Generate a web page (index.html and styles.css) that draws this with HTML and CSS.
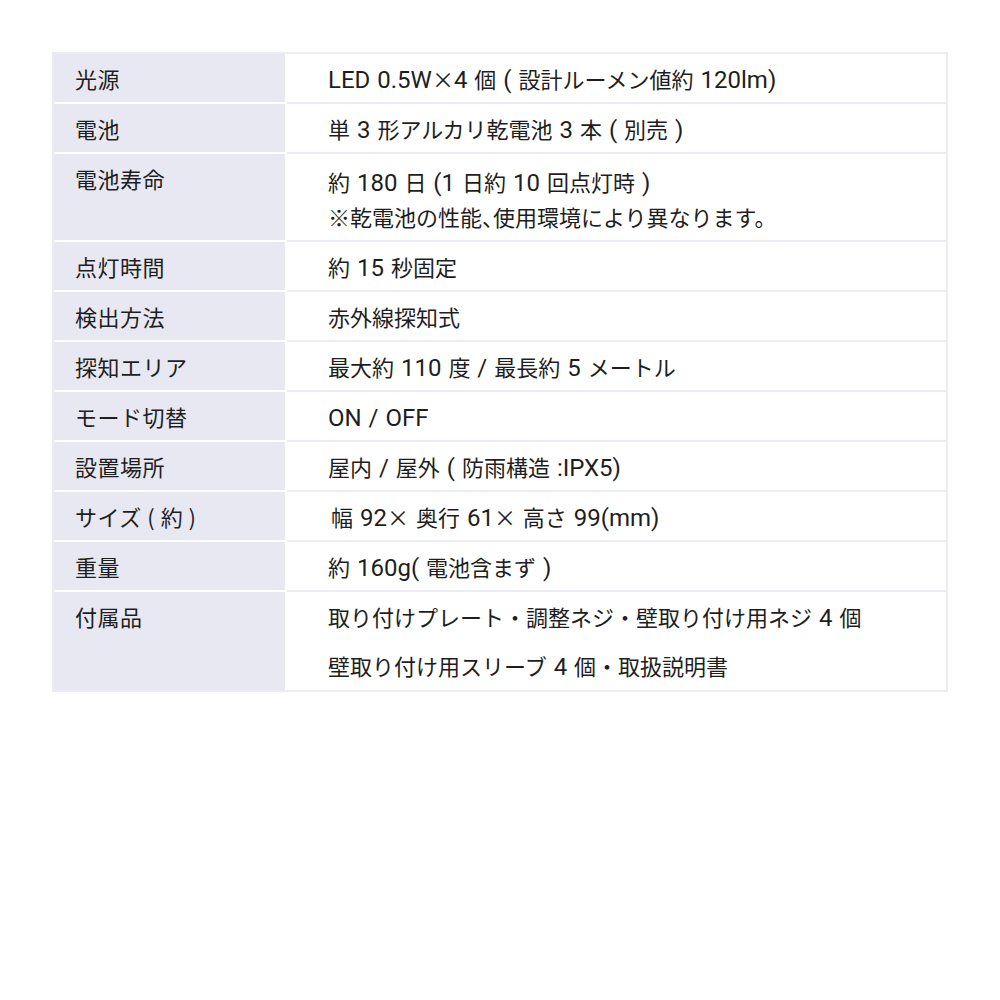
FILE: index.html
```html
<!DOCTYPE html>
<html lang="ja">
<head>
<meta charset="utf-8">
<link rel="stylesheet" href="styles.css">
</head>
<body>
<table class="spec">
  <tr><th>光源</th><td><span class="n">LED 0.5W</span>×<span class="n">4 </span>個<span class="n"> ( </span>設計ルーメン値約<span class="n"> 120lm)</span></td></tr>
  <tr><th>電池</th><td>単<span class="n"> 3 </span>形アルカリ乾電池<span class="n"> 3 </span>本<span class="n"> ( </span>別売<span class="n"> )</span></td></tr>
  <tr><th>電池寿命</th><td class="multi">約<span class="n"> 180 </span>日<span class="n"> (1 </span>日約<span class="n"> 10 </span>回点灯時<span class="n"> )</span><br>※乾電池の性能<span class="p">、</span>使用環境により異なります。</td></tr>
  <tr><th>点灯時間</th><td>約<span class="n"> 15 </span>秒固定</td></tr>
  <tr><th>検出方法</th><td>赤外線探知式</td></tr>
  <tr><th>探知エリア</th><td>最大約<span class="n"> 110 </span>度<span class="n"> / </span>最長約<span class="n"> 5 </span>メートル</td></tr>
  <tr><th>モード切替</th><td><span class="n">ON / OFF</span></td></tr>
  <tr><th>設置場所</th><td>屋内<span class="n"> / </span>屋外<span class="n"> ( </span>防雨構造<span class="n"> :IPX5)</span></td></tr>
  <tr><th>サイズ ( 約 )</th><td><span class="indent">幅</span><span class="n"> 92</span>×<span class="n"> </span>奥行<span class="n"> 61</span>×<span class="n"> </span>高さ<span class="n"> 99(mm)</span></td></tr>
  <tr><th>重量</th><td>約<span class="n"> 160g( </span>電池含まず<span class="n"> )</span></td></tr>
  <tr class="last"><th>付属品</th><td class="wide">取り付けプレート・調整ネジ・壁取り付け用ネジ<span class="n"> 4 </span>個<br>壁取り付け用スリーブ<span class="n"> 4 </span>個・取扱説明書</td></tr>
</table>
</body>
</html>
```
FILE: styles.css
```css
html, body {
  margin: 0;
  padding: 0;
  background: #ffffff;
}
body {
  padding: 52px 52px 0 52px;
  font-family: "Noto Sans CJK JP", "Noto Sans", sans-serif;
  color: #1e1e1e;
}
.spec {
  width: 896px;
  border-collapse: separate;
  border-spacing: 0;
  border: 2px solid #ebebf3;
  font-size: 22px;
}
.spec th,
.spec td {
  height: 48px;
  vertical-align: top;
  padding: 0;
  line-height: 48px;
  font-weight: normal;
  text-align: left;
  box-sizing: border-box;
}
.spec th {
  width: 233px;
  background: #e8e8f2;
  padding-left: 21px;
  border-bottom: 2px solid #ffffff;
  border-right: 2px solid #ffffff;
  letter-spacing: 0.5px;
}
.spec td {
  padding-left: 41px;
  border-bottom: 2px solid #ebebf3;
}
.spec tr.last th,
.spec tr.last td {
  border-bottom: none;
}
.spec td.multi {
  line-height: 35px;
  padding-top: 10px;
  padding-bottom: 6px;
}
.spec td.wide {
  line-height: 49px;
}
.n {
  font-family: Roboto, "Liberation Sans", sans-serif;
  font-size: 24px;
  line-height: 1;
  word-spacing: 1px;
}
.p {
  font-feature-settings: "halt";
}
.indent {
  padding-left: 3px;
}
```
